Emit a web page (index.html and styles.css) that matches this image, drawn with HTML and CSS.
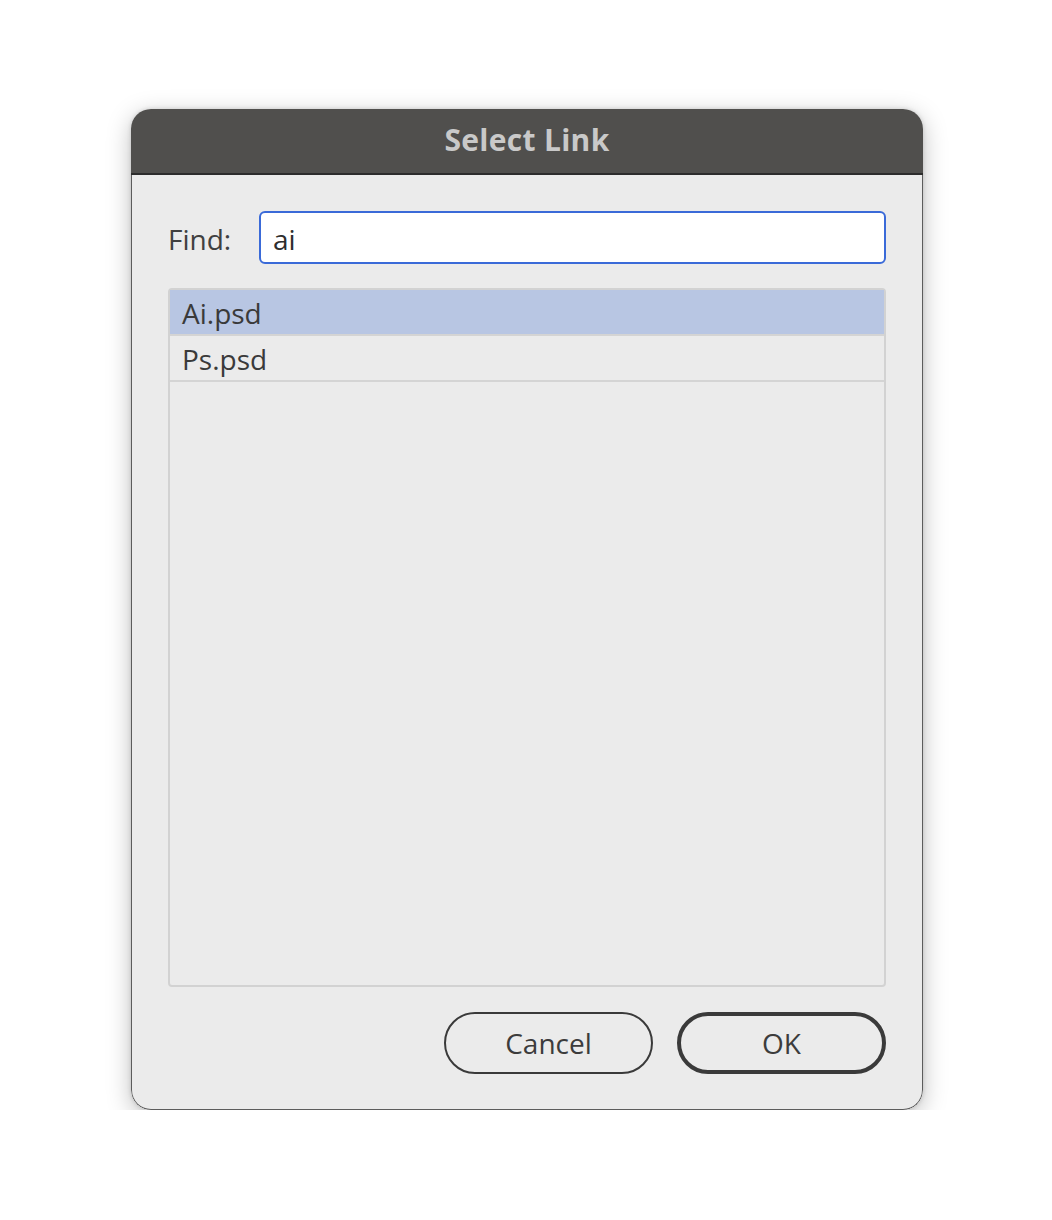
FILE: index.html
```html
<!DOCTYPE html>
<html>
<head>
<meta charset="utf-8">
<link rel="stylesheet" href="styles.css">
</head>
<body>
<div class="dialog">
  <div class="titlebar">Select Link</div>
  <div class="content">
    <div class="find-row">
      <label class="find-label">Find:</label>
      <div class="find-input">ai</div>
    </div>
    <div class="list">
      <div class="row selected">Ai.psd</div>
      <div class="row">Ps.psd</div>
    </div>
    <div class="buttons">
      <div class="btn">Cancel</div>
      <div class="btn default">OK</div>
    </div>
  </div>
</div>
</body>
</html>
```
FILE: styles.css
```css
html, body {
  margin: 0;
  background: #ffffff;
}
body {
  padding: 109px 0 0 131px;
  font-family: "Open Sans", "Noto Sans", sans-serif;
  color: #3c3c3c;
}
.dialog {
  width: 792px;
  height: 1001px;
  display: flex;
  flex-direction: column;
  border-radius: 20px;
  box-shadow: 0 6px 24px rgba(0,0,0,0.25), 0 0 4px rgba(0,0,0,0.15);
  overflow: hidden;
  box-sizing: border-box;
}
.titlebar {
  height: 66px;
  flex: none;
  box-sizing: border-box;
  padding-bottom: 4px;
  background: #504f4d;
  border-bottom: 2px solid #2c2c2c;
  color: #c9c9c9;
  font-weight: 700;
  font-size: 30px;
  display: flex;
  align-items: center;
  justify-content: center;
  letter-spacing: 0.3px;
}
.content {
  flex: 1;
  min-height: 0;
  background: #ebebeb;
  border: 1px solid #5c5c5c;
  border-top: none;
  border-radius: 0 0 20px 20px;
  padding: 36px 36px 35px 36px;
  display: flex;
  flex-direction: column;
}
.find-row {
  display: flex;
  align-items: center;
  gap: 26px;
}
.find-label {
  font-size: 28px;
  width: 65px;
  color: #404040;
  padding-top: 2px;
}
.find-input {
  flex: 1;
  height: 53px;
  box-sizing: border-box;
  background: #ffffff;
  border: 2px solid #3a6ad8;
  border-radius: 6px;
  padding: 2px 12px 0;
  font-size: 28px;
  display: flex;
  align-items: center;
  color: #2e2e2e;
}
.list {
  margin-top: 24px;
  flex: 1;
  border: 2px solid #d2d2d2;
  border-radius: 4px;
  background: #ebebeb;
}
.row {
  height: 41px;
  padding: 3px 0 0 12px;
  line-height: 41px;
  border-bottom: 2px solid #d4d4d4;
  font-size: 28px;
  color: #3a3a3a;
}
.row.selected {
  background: #b8c6e3;
}
.buttons {
  margin-top: 25px;
  display: flex;
  justify-content: flex-end;
  gap: 24px;
}
.btn {
  width: 209px;
  height: 62px;
  box-sizing: border-box;
  border: 2px solid #3a3a3a;
  border-radius: 31px;
  display: flex;
  align-items: center;
  justify-content: center;
  font-size: 28px;
  color: #3c3c3c;
}
.btn.default {
  border: 4px solid #3a3a3a;
}
```
